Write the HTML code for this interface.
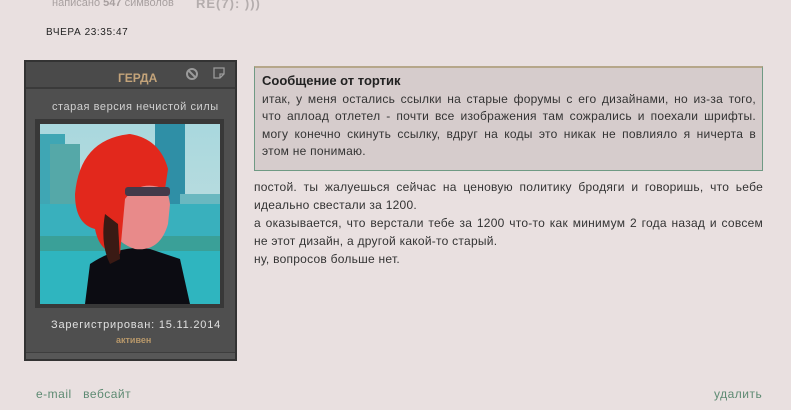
<!DOCTYPE html>
<html><head><meta charset="utf-8"><style>
*{margin:0;padding:0;box-sizing:border-box}
body{width:791px;height:410px;background:#e9e0e0;font-family:"Liberation Sans",Verdana,sans-serif;position:relative;overflow:hidden;color:#2a2a2a}
.a{position:absolute;white-space:nowrap}
.panel{position:absolute;left:24px;top:60px;width:213px;height:301px;background:#4f4f4f;border:2px solid #333}
.hd{position:absolute;left:0;top:0;width:209px;height:27px;background:#4a4a4a;border-bottom:2px solid #3a3a3a}
.quote{position:absolute;left:254px;top:66px;width:509px;height:105px;background:#d6cccc;border:1px solid #6f9a84;border-top:2px solid #b6a78a}
.t{font-size:12px;letter-spacing:0.25px;color:#333;white-space:normal}
.j{text-align:justify;text-align-last:justify;white-space:nowrap}
</style></head><body>
<div class="a" style="left:52px;top:-3px;font-size:11px;color:#a8a0a0">написано <b>547</b> символов</div>
<div class="a" style="left:196px;top:-4px;font-size:13px;font-weight:bold;color:#b4adad;letter-spacing:1px">RE(7): )))</div>
<div class="a" style="left:46px;top:27px;font-size:10px;color:#222;letter-spacing:0.6px">ВЧЕРА 23:35:47</div>

<div class="panel">
 <div class="hd">
  <div class="a" style="left:92px;top:9px;font-size:12px;font-weight:bold;color:#c4a47a">ГЕРДА</div>
  <svg class="a" style="left:159px;top:5px" width="14" height="14" viewBox="0 0 14 14"><circle cx="7" cy="7" r="5" fill="none" stroke="#9a9a9a" stroke-width="2"/><line x1="3.5" y1="3.5" x2="10.5" y2="10.5" stroke="#9a9a9a" stroke-width="2"/></svg>
  <svg class="a" style="left:187px;top:5px" width="12" height="12" viewBox="0 0 12 12"><path d="M1 1H11V7L7 11H1Z M7 11V7H11" fill="none" stroke="#9a9a9a" stroke-width="1.3"/></svg>
 </div>
 <div class="a" style="left:26px;top:39px;font-size:11px;color:#d0d0d0;letter-spacing:0.55px">старая версия нечистой силы</div>
 <div class="a" style="left:9px;top:57px;width:189px;height:189px;background:#383838"></div>
 <svg class="a" style="left:14px;top:62px" width="180" height="180" viewBox="0 0 180 180">
  <defs><linearGradient id="sky" x1="0" y1="0" x2="0" y2="1"><stop offset="0" stop-color="#a9d8de"/><stop offset="1" stop-color="#c8e0e0"/></linearGradient></defs>
  <rect width="180" height="180" fill="url(#sky)"/>
  <rect x="0" y="10" width="25" height="110" fill="#3fa6b4"/>
  <rect x="10" y="20" width="30" height="100" fill="#55a8a8"/>
  <rect x="115" y="0" width="30" height="130" fill="#2f8fa6"/>
  <rect x="140" y="70" width="40" height="60" fill="#6ab8c0"/>
  <rect x="0" y="80" width="180" height="60" fill="#39b0bd"/>
  <rect x="0" y="112" width="180" height="15" fill="#3aa098"/>
  <rect x="0" y="127" width="180" height="53" fill="#2fb5bf"/>
  <path d="M45 180 L50 140 Q80 120 110 125 L140 135 L150 180Z" fill="#0c0c12"/>
  <path d="M70 80 Q70 50 95 45 Q125 45 130 80 L128 100 Q120 128 95 125 Q80 120 75 110Z" fill="#e88a8a"/>
  <path d="M35 70 Q40 15 90 10 Q120 15 128 45 L125 65 Q100 55 85 75 L80 130 Q60 130 55 105 Q35 100 35 70Z" fill="#e2281c"/>
  <path d="M65 90 Q60 120 70 140 L80 135 L78 100Z" fill="#3a1a14"/>
  <rect x="85" y="63" width="45" height="9" rx="3" fill="#443a4a"/>
 </svg>
 <div class="a" style="left:25px;top:257px;font-size:11px;color:#e0e0e0;letter-spacing:0.8px">Зарегистрирован: 15.11.2014</div>
 <div class="a" style="left:90px;top:273px;font-size:9px;font-weight:bold;color:#b8986a">активен</div>
 <div class="a" style="left:0;top:290px;width:209px;height:1px;background:#3e3e3e"></div>
 <div class="a" style="left:0;top:291px;width:209px;height:6px;background:#575757"></div>
</div>

<div class="quote">
 <div class="a" style="left:7px;top:5px;font-size:13px;font-weight:bold;color:#222">Сообщение от тортик</div>
 <div class="a t" style="left:7px;top:23px;width:494px;line-height:17.3px">
  <div class="j">итак, у меня остались ссылки на старые форумы с его дизайнами, но из-за того,</div>
  <div class="j">что аплоад отлетел - почти все изображения там сожрались и поехали шрифты.</div>
  <div class="j">могу конечно скинуть ссылку, вдруг на коды это никак не повлияло я ничерта в</div>
  <div>этом не понимаю.</div>
 </div>
</div>

<div class="a t" style="left:254px;top:178px;width:509px;line-height:18px">
<div class="j">постой. ты жалуешься сейчас на ценовую политику бродяги и говоришь, что ьебе</div>
<div>идеально свестали за 1200.</div>
<div class="j">а оказывается, что верстали тебе за 1200 что-то как минимум 2 года назад и совсем</div>
<div>не этот дизайн, а другой какой-то старый.</div>
<div>ну, вопросов больше нет.</div>
</div>

<div class="a" style="left:36px;top:387px;font-size:12px;color:#5d8a72;letter-spacing:0.5px">e-mail &nbsp; вебсайт</div>
<div class="a" style="left:714px;top:387px;font-size:12px;color:#5d8a72;letter-spacing:0.5px">удалить</div>
</body></html>
